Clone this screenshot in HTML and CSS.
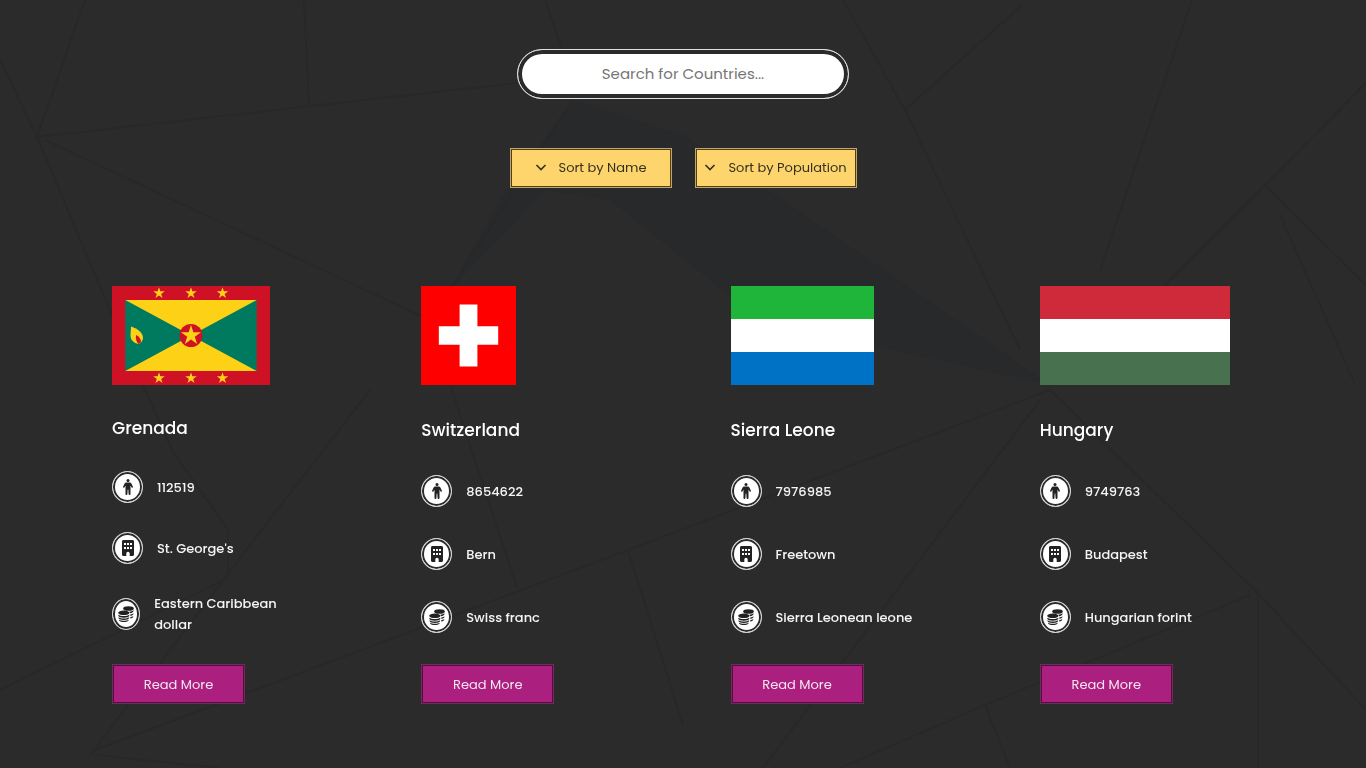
FILE: index.html
```html
<!DOCTYPE html>
<html lang="en">
<head>
<meta charset="utf-8">
<meta name="viewport" content="width=device-width, initial-scale=1">
<title>Countries</title>
<link rel="stylesheet" href="styles.css">
</head>
<body>
<svg class="backdrop" viewBox="0 0 1366 768" preserveAspectRatio="none" aria-hidden="true">
  <g class="facets">
    <path d="M573 100 683 135 790 205 1050 385 760 320 610 200 545 190 450 290 500 200Z"/>
  </g>
  <g class="creases">
    <path d="M85 0 37 137 517 83M304 0 309 106M0 60 37 137 110 310 172 450 228 530 228 578 0 690M45 140 421 316M573 100 450 290M545 0 573 80M843 0 905 110 1020 350M905 110 1022 5M1192 0 1100 270M1366 83 1265 185 1160 290M1265 185 1366 285M1280 215 1355 384M95 750 628 550 1050 390 1255 590 1366 710M628 550 683 725M450 384 517 588M90 755 250 545 370 390M840 768 985 705 1250 595M985 705 1010 768M1258 590V768M763 768 1040 400M95 755 220 768"/>
  </g>
</svg>

<svg class="sprite" aria-hidden="true">
  <symbol id="icon-person" viewBox="0 0 16 16">
    <circle cx="8" cy="1.500" r="1.500"/>
    <path d="M6.500 3.500h3c1 0 1.500.4 1.900 1.100l1.500 3.200c.3.900-.8 1.500-1.300.6L10.500 6.500V15.200c0 1-1.800 1-1.900 0L8.300 10.500h-.6L7.400 15.200c-.1 1-1.900 1-1.900 0V6.500L4.400 8.400c-.5.900-1.600.3-1.300-.6l1.500-3.200c.4-.7.9-1.100 1.900-1.100Z"/>
  </symbol>
  <symbol id="icon-building" viewBox="0 0 16 16">
    <path fill-rule="evenodd" d="M3.500 0h9c.9 0 1.500.6 1.500 1.500v13c0 .9-.6 1.500-1.500 1.500H9.700v-2.500a1.700 1.700 0 0 0-3.400 0V16H3.500C2.600 16 2 15.400 2 14.500v-13C2 .6 2.600 0 3.500 0ZM4 3v2h2V3Zm3 0v2h2V3Zm3 0v2h2V3ZM4 7v2h2V7Zm3 0v2h2V7Zm3 0v2h2V7Z"/>
  </symbol>
  <symbol id="icon-coins" viewBox="0 0 16 16">
    <ellipse cx="10.500" cy="2.500" rx="5.300" ry="2.300"/>
    <ellipse cx="5.800" cy="6.800" rx="5.600" ry="2.300"/>
    <path d="M.3 8.800c2 1.700 9 1.700 11 0v.9c0 2.600-11 2.600-11 0ZM.5 11.300c2 1.600 8.600 1.600 10.600 0v.7c0 2.500-10.600 2.500-10.600 0ZM1 13.800c2 1.400 7.600 1.400 9.600 0v.4c0 2.400-9.600 2.400-9.600 0ZM11.300 5.700c1.600-.2 3.300-.6 4.400-1.400 0 1.900-1.600 2.700-3.600 3ZM12.300 8.500c1.200-.2 2.500-.6 3.300-1.300 0 1.700-1.200 2.300-3.200 2.700ZM12.300 11.100c1.200-.2 2.200-.5 3-1.100 0 1.500-1.200 2.100-3 2.500Z"/>
  </symbol>
  <symbol id="icon-chevron" viewBox="0 0 12 12">
    <path d="M1.500 4 6 8.500 10.500 4" fill="none" stroke="currentColor" stroke-width="1.600"/>
  </symbol>
  <symbol id="star" viewBox="-10 -10 20 20">
    <path d="M0-10 2.250-3.100H9.500L3.600 1.200 5.900 8.100 0 3.800-5.900 8.100-3.600 1.200-9.500-3.100H-2.250Z"/>
  </symbol>
</svg>

<header class="controls">
  <input class="search" type="text" placeholder="Search for Countries..." aria-label="Search for Countries">
  <div class="sorting">
    <button class="button button-sort" type="button"><svg class="chevron"><use href="#icon-chevron"/></svg>Sort by Name</button>
    <button class="button button-sort" type="button"><svg class="chevron"><use href="#icon-chevron"/></svg>Sort by Population</button>
  </div>
</header>

<main class="countries">
  <article class="country">
    <svg class="flag flag-grenada" viewBox="0 0 158 99" preserveAspectRatio="none" role="img" aria-label="Flag of Grenada">
      <path fill="#cf1126" d="M0 0h158v99H0z"/>
      <path fill="#007a5e" d="M13.300 14h131.400v71H13.300z"/>
      <path fill="#fcd116" d="M13.300 14h131.400L79 49.500ZM13.300 85h131.400L79 49.500Z"/>
      <circle cx="79" cy="49.500" r="11.500" fill="#cf1126"/>
      <g fill="#fcd116">
        <use href="#star" x="68.500" y="39" width="21" height="21"/>
        <use href="#star" x="41" y="1.200" width="12" height="12"/>
        <use href="#star" x="73" y="1.200" width="12" height="12"/>
        <use href="#star" x="104.500" y="1.200" width="12" height="12"/>
        <use href="#star" x="41" y="86.200" width="12" height="12"/>
        <use href="#star" x="73" y="86.200" width="12" height="12"/>
        <use href="#star" x="104.500" y="86.200" width="12" height="12"/>
        <path d="M19 40.500c7 2.500 12 6 12 12-.5 2.500-2 4.500-4.500 5.500-5-1-8-4-8-8.500Z"/>
      </g>
      <path fill="#cf1126" d="M24 49c3 1.500 5 4 5 7l-2.500 2c-2-2-3-5-2.500-9Z"/>
    </svg>
    <h2 class="name">Grenada</h2>
    <p class="fact"><span class="badge"><svg class="icon"><use href="#icon-person"/></svg></span>112519</p>
    <p class="fact"><span class="badge"><svg class="icon"><use href="#icon-building"/></svg></span>St. George's</p>
    <p class="fact"><span class="badge"><svg class="icon"><use href="#icon-coins"/></svg></span>Eastern Caribbean dollar</p>
    <button class="button button-more" type="button">Read More</button>
  </article>

  <article class="country">
    <svg class="flag flag-switzerland" viewBox="0 0 32 32" preserveAspectRatio="none" role="img" aria-label="Flag of Switzerland">
      <path fill="#f00" d="M0 0h32v32H0z"/>
      <path fill="#fff" d="M13 6h6v7h7v6h-7v7h-6v-7H6v-6h7z"/>
    </svg>
    <h2 class="name">Switzerland</h2>
    <p class="fact"><span class="badge"><svg class="icon"><use href="#icon-person"/></svg></span>8654622</p>
    <p class="fact"><span class="badge"><svg class="icon"><use href="#icon-building"/></svg></span>Bern</p>
    <p class="fact"><span class="badge"><svg class="icon"><use href="#icon-coins"/></svg></span>Swiss franc</p>
    <button class="button button-more" type="button">Read More</button>
  </article>

  <article class="country">
    <svg class="flag flag-sierra-leone" viewBox="0 0 9 6" preserveAspectRatio="none" role="img" aria-label="Flag of Sierra Leone">
      <path fill="#fff" d="M0 0h9v6H0z"/>
      <path fill="#1eb53a" d="M0 0h9v2H0z"/>
      <path fill="#0072c6" d="M0 4h9v2H0z"/>
    </svg>
    <h2 class="name">Sierra Leone</h2>
    <p class="fact"><span class="badge"><svg class="icon"><use href="#icon-person"/></svg></span>7976985</p>
    <p class="fact"><span class="badge"><svg class="icon"><use href="#icon-building"/></svg></span>Freetown</p>
    <p class="fact"><span class="badge"><svg class="icon"><use href="#icon-coins"/></svg></span>Sierra Leonean leone</p>
    <button class="button button-more" type="button">Read More</button>
  </article>

  <article class="country">
    <svg class="flag flag-hungary" viewBox="0 0 12 6" preserveAspectRatio="none" role="img" aria-label="Flag of Hungary">
      <path fill="#fff" d="M0 0h12v6H0z"/>
      <path fill="#cf2a3a" d="M0 0h12v2H0z"/>
      <path fill="#487150" d="M0 4h12v2H0z"/>
    </svg>
    <h2 class="name">Hungary</h2>
    <p class="fact"><span class="badge"><svg class="icon"><use href="#icon-person"/></svg></span>9749763</p>
    <p class="fact"><span class="badge"><svg class="icon"><use href="#icon-building"/></svg></span>Budapest</p>
    <p class="fact"><span class="badge"><svg class="icon"><use href="#icon-coins"/></svg></span>Hungarian forint</p>
    <button class="button button-more" type="button">Read More</button>
  </article>
</main>
</body>
</html>
```
FILE: styles.css
```css
:root {
  --ground: #2b2b2b;
  --yellow: #fed56c;
  --purple: #ab1f7f;
}

* {
  box-sizing: border-box;
}

body {
  margin: 0;
  background: var(--ground);
  color: #f5f5f5;
  font: 13px/21px Poppins, Inter, "Open Sans", sans-serif;
}

.backdrop {
  position: fixed;
  inset: 0;
  z-index: -1;
  width: 100%;
  height: 100%;
}

.facets {
  fill: #28292a;
}

.creases {
  fill: none;
  stroke: #282829;
  stroke-width: 2;
}

.sprite {
  position: absolute;
  width: 0;
  height: 0;
}

.controls {
  display: flex;
  flex-direction: column;
  align-items: center;
  gap: 49px;
  padding-top: 49px;
}

.search {
  width: 332px;
  height: 50px;
  padding: 0 24px 2px;
  border: 1px solid #e0e0e0;
  border-radius: 25px;
  background: #fff;
  box-shadow: inset 0 0 0 4px var(--ground);
  color: #333;
  font: inherit;
  font-size: 15px;
  text-align: center;
}

.search::placeholder {
  color: #757575;
  opacity: 1;
}

.sorting {
  display: flex;
  gap: 23px;
}

.button {
  height: 40px;
  font: inherit;
  cursor: pointer;
}

.button-sort {
  display: flex;
  align-items: center;
  justify-content: center;
  gap: 12px;
  width: 162px;
  padding: 0 0 2px;
  border: 1px solid #c5a65a;
  background: var(--yellow);
  box-shadow: inset 0 0 0 1px #4a4029;
  color: #33301f;
  white-space: nowrap;
}

.chevron {
  width: 12px;
  height: 12px;
}

.countries {
  display: grid;
  grid-template-columns: repeat(4, 1fr);
  column-gap: 119px;
  padding: 98px 136px 64px 112px;
}

.country {
  display: flex;
  flex-direction: column;
  align-items: flex-start;
  justify-content: space-between;
  gap: 29px;
}

.flag {
  display: block;
  height: 99px;
  max-width: 100%;
}

.flag-grenada {
  width: 158px;
}

.flag-switzerland {
  width: 95px;
}

.flag-sierra-leone {
  width: 143px;
}

.flag-hungary {
  width: 190px;
}

.name {
  margin: 0;
  color: #fff;
  font-size: 17px;
  font-weight: 500;
  line-height: 28px;
}

.fact {
  display: flex;
  align-items: center;
  gap: 14px;
  margin: 0;
  font-weight: 500;
}

.badge {
  display: flex;
  align-items: center;
  justify-content: center;
  width: 31px;
  height: 32px;
  border: 1px solid #d5d5d5;
  border-radius: 50%;
  background: #fff;
  box-shadow: inset 0 0 0 2px var(--ground);
  color: #222;
}

.icon {
  flex: none;
  width: 16px;
  height: 16px;
  fill: currentColor;
}

.button-more {
  width: 133px;
  padding: 0;
  border: 1px solid #7d2563;
  background: var(--purple);
  box-shadow: inset 0 0 0 1px #48163b;
  color: #f7e6f2;
}
```
